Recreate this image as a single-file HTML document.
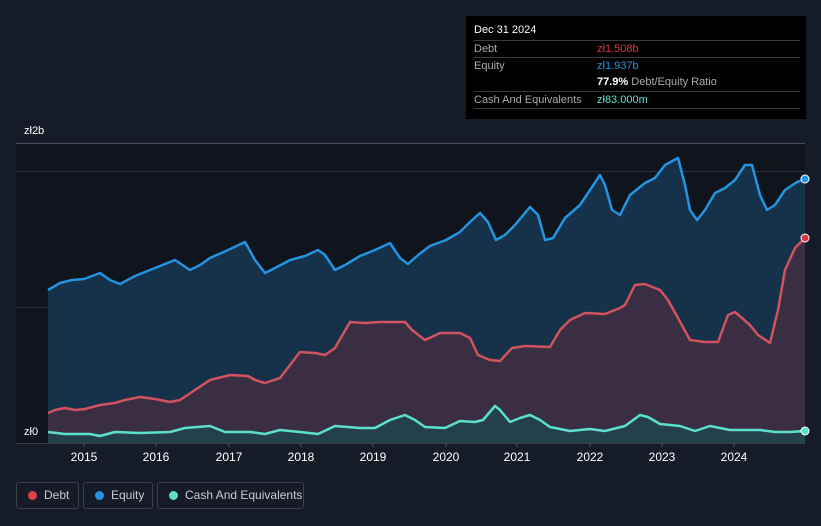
<!DOCTYPE html>
<html><head><meta charset="utf-8"><style>
body{margin:0;background:#151b27;width:821px;height:526px;overflow:hidden;font-family:"Liberation Sans",sans-serif;position:relative}
.tt{position:absolute;left:466px;top:16px;width:340px;height:103px;background:#000;color:#fff;font-size:11px}
.tt .h{position:absolute;left:8px;top:8px;font-size:11px}
.row{position:absolute;left:8px;width:326px;border-top:1px solid #3a3a3a;height:16px;line-height:16px;color:#aaa}
.row span{position:absolute;left:123px}
.leg{position:absolute;top:482px;height:27px;border:1px solid #3a3f4a;border-radius:3px;color:#ccc;font-size:12px;line-height:25px;box-sizing:border-box}
.leg i{position:absolute;left:11px;top:8px;width:9px;height:9px;border-radius:50%}
.leg b{font-weight:normal;position:absolute;left:27px}
.ax{position:absolute;color:#fff;font-size:11px}
</style></head><body>
<svg width="821" height="526" style="position:absolute;left:0;top:0">
<rect x="16" y="143" width="789" height="300" fill="#10141d"/>
<line x1="16" y1="143.5" x2="805" y2="143.5" stroke="#4a4f58"/>
<line x1="16" y1="171.5" x2="805" y2="171.5" stroke="#2a2f38"/>
<line x1="16" y1="307.5" x2="805" y2="307.5" stroke="#2a2f38"/>
<polygon fill="#173450" fill-opacity="0.9" points="48,443 48,290 60,283 72,280 84,279 100,273 110,280 120,284 135,276 150,270 160,266 175,260 190,270 200,265 210,258 228,250 245,242 255,260 265,273 275,268 290,260 305,256 318,250 325,255 335,270 345,265 360,256 375,250 390,243 400,258 408,264 418,255 430,246 446,240 460,232 470,222 480,213 488,222 496,240 505,235 515,225 530,207 538,215 545,240 553,238 565,218 580,205 590,190 600,175 605,185 612,210 620,215 630,195 645,183 655,178 665,165 678,158 685,185 690,210 697,220 705,210 715,193 725,188 735,180 745,165 752,165 760,195 767,210 775,205 785,190 797,182 805,179 805,443"/>
<polygon fill="#3a2f42" points="48,443 48,413 55,410 65,408 75,410 85,409 100,405 115,403 125,400 140,397 155,399 170,402 180,400 195,390 210,380 230,375 248,376 255,380 265,383 280,378 290,365 300,352 315,353 325,355 335,348 350,322 365,323 380,322 405,322 412,330 425,340 440,333 460,333 470,338 478,355 490,360 500,361 512,348 525,346 550,347 560,330 570,320 585,313 605,314 620,308 625,305 635,285 645,284 660,290 668,300 678,318 690,340 705,342 718,342 728,315 735,312 750,325 758,335 770,343 778,310 785,270 795,248 805,238 805,443"/>
<polygon fill="#24404a" points="48,443 48,432 65,434 90,434 100,436 115,432 140,433 170,432 185,428 210,426 225,432 250,432 265,434 280,430 300,432 318,434 335,426 360,428 375,428 390,420 405,415 415,420 425,427 445,428 460,421 475,422 483,420 495,406 500,410 510,422 520,418 530,415 540,420 550,427 570,431 590,429 605,431 625,426 640,415 648,417 660,424 680,426 695,431 710,426 720,428 730,430 760,430 775,432 790,432 805,431 805,443"/>
<g fill="none" stroke-width="2.5" stroke-linejoin="round">
<polyline stroke="#2394df" points="48,290 60,283 72,280 84,279 100,273 110,280 120,284 135,276 150,270 160,266 175,260 190,270 200,265 210,258 228,250 245,242 255,260 265,273 275,268 290,260 305,256 318,250 325,255 335,270 345,265 360,256 375,250 390,243 400,258 408,264 418,255 430,246 446,240 460,232 470,222 480,213 488,222 496,240 505,235 515,225 530,207 538,215 545,240 553,238 565,218 580,205 590,190 600,175 605,185 612,210 620,215 630,195 645,183 655,178 665,165 678,158 685,185 690,210 697,220 705,210 715,193 725,188 735,180 745,165 752,165 760,195 767,210 775,205 785,190 797,182 805,179"/>
<polyline stroke="#d2525e" points="48,413 55,410 65,408 75,410 85,409 100,405 115,403 125,400 140,397 155,399 170,402 180,400 195,390 210,380 230,375 248,376 255,380 265,383 280,378 290,365 300,352 315,353 325,355 335,348 350,322 365,323 380,322 405,322 412,330 425,340 440,333 460,333 470,338 478,355 490,360 500,361 512,348 525,346 550,347 560,330 570,320 585,313 605,314 620,308 625,305 635,285 645,284 660,290 668,300 678,318 690,340 705,342 718,342 728,315 735,312 750,325 758,335 770,343 778,310 785,270 795,248 805,238"/>
<polyline stroke="#5ce0cc" points="48,432 65,434 90,434 100,436 115,432 140,433 170,432 185,428 210,426 225,432 250,432 265,434 280,430 300,432 318,434 335,426 360,428 375,428 390,420 405,415 415,420 425,427 445,428 460,421 475,422 483,420 495,406 500,410 510,422 520,418 530,415 540,420 550,427 570,431 590,429 605,431 625,426 640,415 648,417 660,424 680,426 695,431 710,426 720,428 730,430 760,430 775,432 790,432 805,431"/>
</g>
<line x1="16" y1="443.5" x2="805" y2="443.5" stroke="#3a3f48"/>
<g stroke="#555"><line x1="84" y1="443" x2="84" y2="447"/><line x1="156" y1="443" x2="156" y2="447"/><line x1="229" y1="443" x2="229" y2="447"/><line x1="301" y1="443" x2="301" y2="447"/><line x1="373" y1="443" x2="373" y2="447"/><line x1="446" y1="443" x2="446" y2="447"/><line x1="517" y1="443" x2="517" y2="447"/><line x1="590" y1="443" x2="590" y2="447"/><line x1="662" y1="443" x2="662" y2="447"/><line x1="734" y1="443" x2="734" y2="447"/></g>
<circle cx="805" cy="179" r="4" fill="#2394df" stroke="#fff" stroke-width="1"/>
<circle cx="805" cy="238" r="4" fill="#e0323f" stroke="#fff" stroke-width="1"/>
<circle cx="805" cy="431" r="4" fill="#5ce0cc" stroke="#fff" stroke-width="1"/>
<g fill="#fff" font-size="12" text-anchor="middle" font-family="Liberation Sans,sans-serif">
<text x="84" y="461">2015</text><text x="156" y="461">2016</text><text x="229" y="461">2017</text><text x="301" y="461">2018</text><text x="373" y="461">2019</text><text x="446" y="461">2020</text><text x="517" y="461">2021</text><text x="590" y="461">2022</text><text x="662" y="461">2023</text><text x="734" y="461">2024</text>
</g>
</svg>
<div class="ax" style="left:24px;top:125px">zł2b</div>
<div class="ax" style="left:24px;top:426px">zł0</div>
<div class="tt">
<div class="h">Dec 31 2024</div>
<div class="row" style="top:24px">Debt<span style="color:#e0323f">zł1.508b</span></div>
<div class="row" style="top:41px">Equity<span style="color:#2394df">zł1.937b</span></div>
<div class="row" style="top:58px;border-top:none"><span><b style="color:#fff">77.9%</b> Debt/Equity Ratio</span></div>
<div class="row" style="top:75px">Cash And Equivalents<span style="color:#5ce0cc">zł83.000m</span></div>
<div class="row" style="top:92px;height:0"></div>
</div>
<div class="leg" style="left:16px;width:63px"><i style="background:#e0404a"></i><b>Debt</b></div>
<div class="leg" style="left:83px;width:70px"><i style="background:#2394df"></i><b>Equity</b></div>
<div class="leg" style="left:157px;width:147px"><i style="background:#5ce0cc"></i><b>Cash And Equivalents</b></div>
</body></html>
